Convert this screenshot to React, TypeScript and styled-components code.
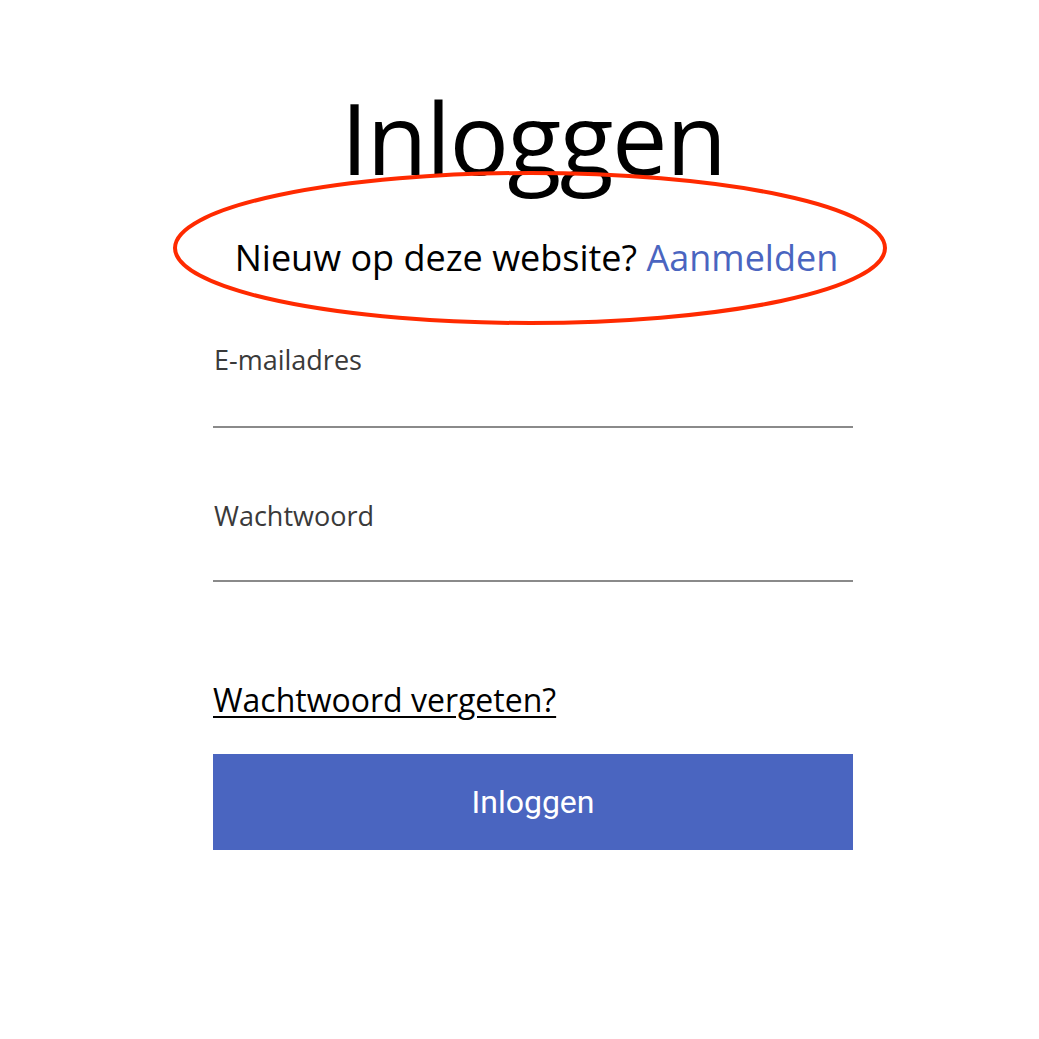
import React from "react";
import styled, { createGlobalStyle } from "styled-components";

const Global = createGlobalStyle`
  html, body { margin: 0; padding: 0; background: #fff; }
  body { font-family: "Open Sans", "Liberation Sans", sans-serif; }
  * { box-sizing: border-box; }
`;

const Page = styled.div`
  position: relative;
  width: 1039px;
  height: 1039px;
  overflow: hidden;
  padding-top: 83px;
`;

const Form = styled.form`
  width: 640px;
  margin: 0 0 0 213px;
  display: flex;
  flex-direction: column;
`;

const Title = styled.h1`
  margin: 0;
  font-size: 99px;
  line-height: 108px;
  font-weight: 400;
  letter-spacing: -1.5px;
  text-align: center;
  color: #000;
`;

const Subtitle = styled.p`
  margin: 49px 0 0;
  font-size: 36px;
  line-height: 36px;
  text-align: center;
  color: #000;
  padding-left: 7px;
  white-space: nowrap;
`;

const SignUp = styled.a`
  color: #4a65c0;
  text-decoration: none;
`;

const Field = styled.label<{ $gap: number }>`
  display: flex;
  flex-direction: column;
  margin-top: ${(p) => p.$gap}px;
`;

const LabelText = styled.span<{ $drop?: number }>`
  font-size: 27px;
  line-height: 26px;
  color: #3a3a3a;
  padding-left: 1px;
  margin-top: ${(p) => p.$drop ?? 0}px;
`;

const Input = styled.input<{ $height: number }>`
  height: ${(p) => p.$height}px;
  border: none;
  border-bottom: 2px solid #8a8a8a;
  outline: none;
  background: transparent;
  font: inherit;
  font-size: 24px;
  padding: 0;
`;

const Forgot = styled.a`
  margin-top: 103px;
  font-size: 32px;
  line-height: 30px;
  color: #000;
  text-decoration: underline;
  text-decoration-thickness: 2px;
  text-underline-offset: 4px;
  align-self: flex-start;
`;

const Submit = styled.button`
  margin-top: 39px;
  height: 96px;
  border: none;
  background: #4a65c0;
  color: #fff;
  font-family: Roboto, "Liberation Sans", sans-serif;
  font-size: 32px;
  font-weight: 400;
  cursor: pointer;
`;

const Annotation = styled.svg`
  position: absolute;
  left: 0;
  top: 0;
  pointer-events: none;
`;

export default function App() {
  return (
    <Page>
      <Global />
      <Form onSubmit={(e) => e.preventDefault()}>
        <Title>Inloggen</Title>
        <Subtitle>
          Nieuw op deze website? <SignUp href="#">Aanmelden</SignUp>
        </Subtitle>
        <Field $gap={71}>
          <LabelText>E-mailadres</LabelText>
          <Input type="email" $height={55} />
        </Field>
        <Field $gap={73}>
          <LabelText $drop={2}>Wachtwoord</LabelText>
          <Input type="password" $height={53} />
        </Field>
        <Forgot href="#">Wachtwoord vergeten?</Forgot>
        <Submit type="submit">Inloggen</Submit>
      </Form>
      <Annotation width="1039" height="1039" viewBox="0 0 1039 1039">
        <ellipse cx="530" cy="248" rx="355" ry="75" fill="none" stroke="#ff2a00" strokeWidth="4" />
      </Annotation>
    </Page>
  );
}
